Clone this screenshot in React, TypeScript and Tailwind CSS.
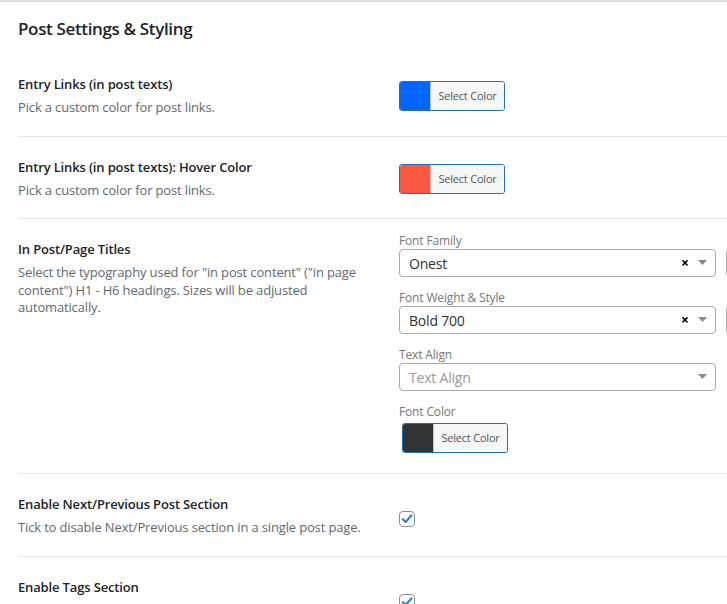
import React from "react";

const font = { fontFamily: '"Open Sans", "Noto Sans", sans-serif' };

function ColorButton({ color }: { color: string }) {
  return (
    <div className="flex h-[30px] w-[106px] border border-[#2271b1] rounded-[3px] overflow-hidden">
      <div className="w-[30px] shrink-0" style={{ backgroundColor: color }} />
      <div className="flex-1 flex items-center justify-center bg-[#f6f7f7] border-l border-[#c3c4c7] text-[11px] text-[#50575e] tracking-[-0.2px]">
        Select Color
      </div>
    </div>
  );
}

function Checkbox() {
  return (
    <div className="w-[16px] h-[16px] border border-[#8c8f94] rounded-[4px] bg-white flex items-center justify-center">
      <svg width="12" height="12" viewBox="0 0 12 12">
        <path d="M1.8 6.2 L4.6 9 L10.4 2.4" fill="none" stroke="#3582c4" strokeWidth="2.2" strokeLinecap="round" strokeLinejoin="round" />
      </svg>
    </div>
  );
}

function Select({ value, placeholder, clear }: { value: string; placeholder?: boolean; clear?: boolean }) {
  return (
    <div className="flex items-center h-[28px] w-[317px] shrink-0 border border-[#aaa] rounded-[4px] bg-white pl-[9px] pr-[7px]">
      <span className={"flex-1 text-[14px] tracking-[-0.2px] " + (placeholder ? "text-[#999]" : "text-[#2c3338]")}>{value}</span>
      {clear && <span className="text-[14px] font-bold text-black mr-[9px] leading-none">×</span>}
      <svg width="9" height="6" viewBox="0 0 9 6" className="mr-[1px]">
        <path d="M0 0 L9 0 L4.5 5 Z" fill="#888" />
      </svg>
    </div>
  );
}

function Row({
  title,
  desc,
  children,
  top,
  check,
}: {
  title: string;
  desc: React.ReactNode;
  children: React.ReactNode;
  top?: boolean;
  check?: boolean;
}) {
  return (
    <div className="flex border-b border-[#e6e6e6]">
      <div className="w-[381px] shrink-0 pt-[20px] pb-[19px] pr-[18px]">
        <div className="text-[13px] leading-[20px] font-[560] tracking-[-0.15px] text-[#1d2327]">{title}</div>
        <div className="mt-[5px] text-[13px] leading-[17.5px] tracking-[-0.15px] text-[#646970]">{desc}</div>
      </div>
      <div className={"flex " + (top ? "items-start" : check ? "items-center pt-[9px]" : "items-center pt-[3px]")}>{children}</div>
    </div>
  );
}

function Label({ children }: { children: React.ReactNode }) {
  return <div className="text-[12px] leading-[16px] tracking-[-0.15px] text-[#777]">{children}</div>;
}

export default function App() {
  return (
    <div style={font} className="w-[727px] h-[604px] overflow-hidden bg-white border-t-2 border-[#dcdcde]">
      <div className="pl-[18px]">
        <h2 className="pt-[14px] mb-[12px] text-[17px] leading-[26px] font-semibold tracking-[-0.35px] text-[#1d2327]">
          Post Settings &amp; Styling
        </h2>
        <Row title="Entry Links (in post texts)" desc="Pick a custom color for post links.">
          <ColorButton color="#0066ff" />
        </Row>
        <Row title="Entry Links (in post texts): Hover Color" desc="Pick a custom color for post links.">
          <ColorButton color="#f95a41" />
        </Row>
        <Row
          top
          title="In Post/Page Titles"
          desc={'Select the typography used for "in post content" ("in page content") H1 - H6 headings. Sizes will be adjusted automatically.'}
        >
          <div className="pt-[14px] pb-[20px] flex gap-[10px]">
            <div className="flex flex-col">
              <Label>Font Family</Label>
              <Select value="Onest" clear />
              <div className="mt-[13px]">
                <Label>Font Weight &amp; Style</Label>
              </div>
              <Select value="Bold 700" clear />
              <div className="mt-[13px]">
                <Label>Text Align</Label>
              </div>
              <Select value="Text Align" placeholder />
              <div className="mt-[13px] mb-[3px]">
                <Label>Font Color</Label>
              </div>
              <div className="pl-[3px]">
                <ColorButton color="#333333" />
              </div>
            </div>
            <div className="flex flex-col">
              <Label>&nbsp;</Label>
              <div className="h-[28px] w-[100px] border border-[#aaa] rounded-[4px]" />
              <div className="mt-[13px]">
                <Label>&nbsp;</Label>
              </div>
              <div className="h-[28px] w-[100px] border border-[#aaa] rounded-[4px]" />
            </div>
          </div>
        </Row>
        <Row check title="Enable Next/Previous Post Section" desc="Tick to disable Next/Previous section in a single post page.">
          <Checkbox />
        </Row>
        <Row check title="Enable Tags Section" desc="Tick to disable tags section in a single post page.">
          <Checkbox />
        </Row>
      </div>
    </div>
  );
}
